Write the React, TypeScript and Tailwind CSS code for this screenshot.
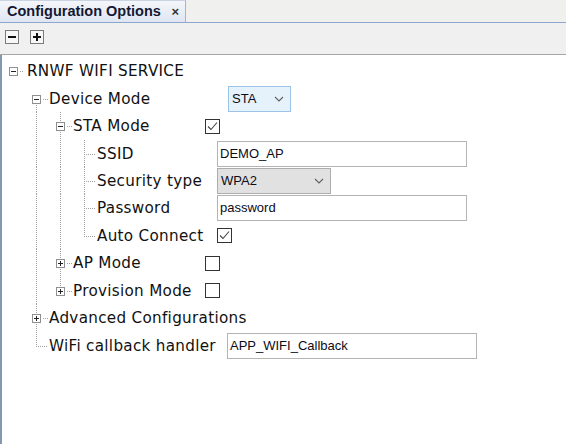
import React from "react";

type Handle = { h: "minus" | "plus"; up: boolean; down: boolean };
type Cell = "blank" | "pipe" | "tee" | "ell" | Handle;

type Control =
  | { kind: "none" }
  | { kind: "check"; checked: boolean }
  | { kind: "input"; value: string; w: number }
  | { kind: "combo"; value: string; w: number; blue: boolean };

type Row = { cells: Cell[]; label: string; h: number; x?: number; ctrl: Control };

const rows: Row[] = [
  { cells: [{ h: "minus", up: false, down: false }], label: "RNWF WIFI SERVICE", h: 28, ctrl: { kind: "none" } },
  { cells: ["blank", { h: "minus", up: false, down: true }], label: "Device Mode", h: 27, x: 228, ctrl: { kind: "combo", value: "STA", w: 63, blue: true } },
  { cells: ["blank", "pipe", { h: "minus", up: true, down: true }], label: "STA Mode", h: 28, x: 205, ctrl: { kind: "check", checked: true } },
  { cells: ["blank", "pipe", "pipe", "tee"], label: "SSID", h: 27, x: 217, ctrl: { kind: "input", value: "DEMO_AP", w: 250 } },
  { cells: ["blank", "pipe", "pipe", "tee"], label: "Security type", h: 27, x: 217, ctrl: { kind: "combo", value: "WPA2", w: 114, blue: false } },
  { cells: ["blank", "pipe", "pipe", "tee"], label: "Password", h: 28, x: 217, ctrl: { kind: "input", value: "password", w: 250 } },
  { cells: ["blank", "pipe", "pipe", "ell"], label: "Auto Connect", h: 27, x: 217, ctrl: { kind: "check", checked: true } },
  { cells: ["blank", "pipe", { h: "plus", up: true, down: true }], label: "AP Mode", h: 28, x: 205, ctrl: { kind: "check", checked: false } },
  { cells: ["blank", "pipe", { h: "plus", up: true, down: false }], label: "Provision Mode", h: 27, x: 205, ctrl: { kind: "check", checked: false } },
  { cells: ["blank", { h: "plus", up: true, down: true }], label: "Advanced Configurations", h: 28, ctrl: { kind: "none" } },
  { cells: ["blank", "ell"], label: "WiFi callback handler", h: 27, x: 227, ctrl: { kind: "input", value: "APP_WIFI_Callback", w: 250 } },
];

const LINE = "#a0a0a0";

function TreeCell({ cell, w, h, c }: { cell: Cell; w: number; h: number; c: number }) {
  const cx = c + 0.5;
  const cy = 14.5;
  const dash = "1 1";
  const parts: React.ReactNode[] = [];
  if (cell === "pipe") {
    parts.push(<line key="v" x1={cx} y1={0} x2={cx} y2={h} stroke={LINE} strokeDasharray={dash} />);
  } else if (cell === "tee" || cell === "ell") {
    parts.push(<line key="v" x1={cx} y1={0} x2={cx} y2={cell === "tee" ? h : cy} stroke={LINE} strokeDasharray={dash} />);
    parts.push(<line key="hz" x1={cx + 1} y1={cy} x2={w} y2={cy} stroke={LINE} strokeDasharray={dash} />);
  } else if (cell !== "blank") {
    if (cell.up) parts.push(<line key="u" x1={cx} y1={0} x2={cx} y2={cy - 5} stroke={LINE} strokeDasharray={dash} />);
    if (cell.down) parts.push(<line key="d" x1={cx} y1={cy + 5} x2={cx} y2={h} stroke={LINE} strokeDasharray={dash} />);
    parts.push(<line key="hz" x1={cx + 6} y1={cy} x2={w} y2={cy} stroke={LINE} strokeDasharray={dash} />);
    parts.push(<rect key="b" x={cx - 4} y={cy - 4} width={8} height={8} fill="#fff" stroke="#8e8f8f" />);
    parts.push(<line key="m" x1={cx - 2.5} y1={cy} x2={cx + 2.5} y2={cy} stroke="#222" />);
    if (cell.h === "plus") parts.push(<line key="p" x1={cx} y1={cy - 2.5} x2={cx} y2={cy + 2.5} stroke="#222" />);
  }
  return (
    <svg width={w} height={h} className="block flex-none" shapeRendering="crispEdges">
      {parts}
    </svg>
  );
}

function Chevron() {
  return (
    <svg width="10" height="6" className="block" shapeRendering="geometricPrecision">
      <polyline points="1,1 5,5 9,1" fill="none" stroke="#606060" strokeWidth="1.1" />
    </svg>
  );
}

function Checkbox({ checked }: { checked: boolean }) {
  return (
    <div className="w-[15px] h-[15px] border border-[#333333] bg-white flex items-center justify-center">
      {checked && (
        <svg width="13" height="13">
          <polyline points="2,6.5 5,9.5 11,2.5" fill="none" stroke="#444" strokeWidth="1.1" />
        </svg>
      )}
    </div>
  );
}

function ControlView({ ctrl }: { ctrl: Control }) {
  const font = "font-['Liberation_Sans',Arial,sans-serif] text-[13px] text-[#0c0c18]";
  if (ctrl.kind === "check") return <Checkbox checked={ctrl.checked} />;
  if (ctrl.kind === "input")
    return (
      <div
        className={`h-[26px] border border-[#b4b4b4] bg-white flex items-center pl-[2px] ${font}`}
        style={{ width: ctrl.w }}
      >
        {ctrl.value}
      </div>
    );
  if (ctrl.kind === "combo")
    return (
      <div
        className={`h-[26px] border flex items-center justify-between pl-[3px] pr-[6px] ${font} ${
          ctrl.blue ? "bg-[#e5f1fb] border-[#9cc3e8]" : "bg-[#e1e1e1] border-[#adadad]"
        }`}
        style={{ width: ctrl.w }}
      >
        <span>{ctrl.value}</span>
        <Chevron />
      </div>
    );
  return null;
}

export default function App() {
  return (
    <div className="w-[566px] h-[444px] bg-white flex flex-col overflow-hidden">
      {/* tab bar */}
      <div className="h-[23px] flex-none flex bg-[#f0f0ee] border-b border-[#8ba7cc]">
        <div className="w-[186px] h-full flex items-center justify-between pl-[7px] pr-[6px] bg-gradient-to-b from-[#f4f6fa] to-[#dfe6f2] border-r border-[#a7b3c6] border-t border-t-[#c9d3e2]">
          <span className="font-['Liberation_Sans',Arial,sans-serif] font-bold text-[14.5px] text-[#141834] leading-none">
            Configuration Options
          </span>
          <span className="font-['Liberation_Sans',Arial,sans-serif] font-bold text-[13px] text-[#333] leading-none">×</span>
        </div>
      </div>
      {/* toolbar */}
      <div className="h-[32px] flex-none bg-[#f0f0f0] border-b border-[#a6a6a6] flex items-start gap-[11px] pt-[7px] pl-[5px]">
        <div className="w-[14px] h-[14px] border border-[#7a7a7a] bg-[#f7f7f7] flex items-center justify-center">
          <div className="w-[8px] h-[2px] bg-[#111]" />
        </div>
        <div className="w-[14px] h-[14px] border border-[#7a7a7a] bg-[#f7f7f7] flex items-center justify-center relative">
          <div className="w-[8px] h-[2px] bg-[#111]" />
          <div className="w-[2px] h-[8px] bg-[#111] absolute" />
        </div>
      </div>
      {/* tree */}
      <div className="flex-1 border-l-2 border-[#8497b0] pt-[2px]">
        {rows.map((r, i) => (
          <div key={i} className="flex items-center" style={{ height: r.h }}>
            <div className="flex items-center flex-none" style={r.x ? { width: r.x - 2 } : undefined}>
              {r.cells.map((c, j) => (
                <TreeCell key={j} cell={c} w={j === 0 ? 22 : 24} h={r.h} c={j === 0 ? 11 : 12} />
              ))}
              <span
                className={`whitespace-nowrap font-['DejaVu_Sans',sans-serif] text-[15.2px] tracking-[0.3px] text-[#111] leading-none pt-[2px] ${
                  i === 0 ? "pl-[3px]" : "pl-[1px]"
                }`}
              >
                {r.label}
              </span>
            </div>
            <ControlView ctrl={r.ctrl} />
          </div>
        ))}
      </div>
    </div>
  );
}
